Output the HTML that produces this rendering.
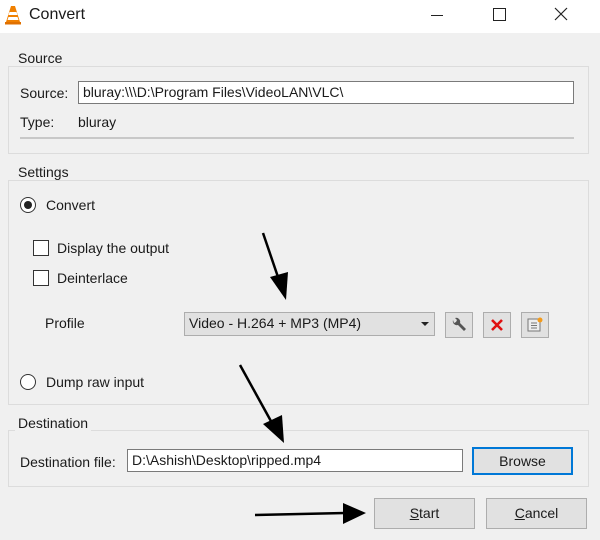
<!DOCTYPE html>
<html><head><style>
*{box-sizing:border-box;margin:0;padding:0}
body{width:600px;height:540px;background:#f0f0f0;font-family:"Liberation Sans",sans-serif;font-size:14px;color:#1a1a1a;position:relative;overflow:hidden}
.a{position:absolute;white-space:nowrap}
.grp{position:absolute;border:1px solid #dcdcdc;}
.lbl{position:absolute;background:#f0f0f0;padding:0 3px;font-size:14px}
.inp{position:absolute;background:#fff;border:1px solid #7a7a7a;padding:2px 4px;height:23px;line-height:17px}
.btn{position:absolute;background:#e1e1e1;border:1px solid #adadad;text-align:center}
.cb{position:absolute;width:16px;height:16px;border:1px solid #333;background:#fff}
.rb{position:absolute;width:16px;height:16px;border:1px solid #333;border-radius:50%;background:#fff}
</style></head><body>
<div class="a" style="left:0;top:0;width:600px;height:33px;background:#fff"></div>
<svg class="a" style="left:4px;top:5px" width="18" height="20" viewBox="0 0 18 20"><path d="M7 1h4l5 16H2z" fill="#f08000"/><path d="M5.5 7h7l1 3h-9zM4.5 12h9l1 3h-11z" fill="#fff"/><rect x="1" y="17" width="16" height="2.5" fill="#e07000"/></svg>
<div class="a" style="left:29px;top:6px;font-size:16px">Convert</div>
<div class="a" style="left:431px;top:15px;width:12px;height:1px;background:#222"></div>
<div class="a" style="left:493px;top:8px;width:13px;height:13px;border:1px solid #222"></div>
<svg class="a" style="left:554px;top:7px" width="14" height="14"><path d="M1 1L13 13M13 1L1 13" stroke="#222" stroke-width="1.2"/></svg>

<div class="grp" style="left:8px;top:66px;width:581px;height:88px"></div>
<div class="lbl" style="left:15px;top:50px">Source</div>
<div class="a" style="left:20px;top:85px">Source:</div>
<div class="inp" style="left:78px;top:81px;width:496px">bluray:\\\D:\Program Files\VideoLAN\VLC\</div>
<div class="a" style="left:20px;top:114px">Type:</div>
<div class="a" style="left:78px;top:114px">bluray</div>
<div class="a" style="left:20px;top:137px;width:554px;height:2px;background:#c8c8c8"></div>

<div class="grp" style="left:8px;top:180px;width:581px;height:225px"></div>
<div class="lbl" style="left:15px;top:164px">Settings</div>
<div class="rb" style="left:20px;top:197px"></div>
<div class="a" style="left:24px;top:201px;width:8px;height:8px;border-radius:50%;background:#222"></div>
<div class="a" style="left:46px;top:197px">Convert</div>
<div class="cb" style="left:33px;top:240px"></div>
<div class="a" style="left:57px;top:240px">Display the output</div>
<div class="cb" style="left:33px;top:270px"></div>
<div class="a" style="left:57px;top:270px">Deinterlace</div>
<div class="a" style="left:45px;top:315px">Profile</div>
<div class="btn" style="left:184px;top:312px;width:251px;height:24px;text-align:left;padding:2px 4px">Video - H.264 + MP3 (MP4)</div>
<div class="a" style="left:421px;top:322px;width:0;height:0;border-left:4px solid transparent;border-right:4px solid transparent;border-top:4px solid #222"></div>
<div class="btn" style="left:445px;top:312px;width:28px;height:26px"></div>
<svg class="a" style="left:450px;top:317px" width="18" height="16"><path d="M3 3a4 4 0 0 0 5 5l6 6 2-2-6-6a4 4 0 0 0-5-5l2 2-1 2-2 1z" fill="#555"/></svg>
<div class="btn" style="left:483px;top:312px;width:28px;height:26px"></div>
<svg class="a" style="left:489px;top:317px" width="16" height="16"><path d="M3 3L13 13M13 3L3 13" stroke="#e01010" stroke-width="2.6"/></svg>
<div class="btn" style="left:521px;top:312px;width:28px;height:26px"></div>
<svg class="a" style="left:526px;top:316px" width="18" height="18"><rect x="2" y="3" width="12" height="12" fill="#eee" stroke="#777"/><path d="M5 7h6M5 9.5h6M5 12h6" stroke="#777"/><circle cx="14" cy="4" r="2.5" fill="#f39a1a"/></svg>
<div class="rb" style="left:20px;top:374px"></div>
<div class="a" style="left:46px;top:374px">Dump raw input</div>

<div class="grp" style="left:8px;top:430px;width:581px;height:57px"></div>
<div class="lbl" style="left:15px;top:415px">Destination</div>
<div class="a" style="left:20px;top:454px">Destination file:</div>
<div class="inp" style="left:127px;top:449px;width:336px">D:\Ashish\Desktop\ripped.mp4</div>
<div class="btn" style="left:472px;top:447px;width:101px;height:28px;border:2px solid #0078d7;line-height:24px">Browse</div>
<div class="btn" style="left:374px;top:498px;width:101px;height:31px;line-height:29px"><u>S</u>tart</div>
<div class="btn" style="left:486px;top:498px;width:101px;height:31px;line-height:29px"><u>C</u>ancel</div>

<svg class="a" style="left:0;top:0" width="600" height="540">
<path d="M263 233L279 280" stroke="#000" stroke-width="2.5"/><path d="M270 277L288 272L286 300z" fill="#000"/>
<path d="M240 365L272 423" stroke="#000" stroke-width="2.5"/><path d="M263 424L282 415L284 443z" fill="#000"/>
<path d="M255 515L345 513" stroke="#000" stroke-width="2.5"/><path d="M343 503L366 513L343 524z" fill="#000"/>
</svg>
</body></html>
